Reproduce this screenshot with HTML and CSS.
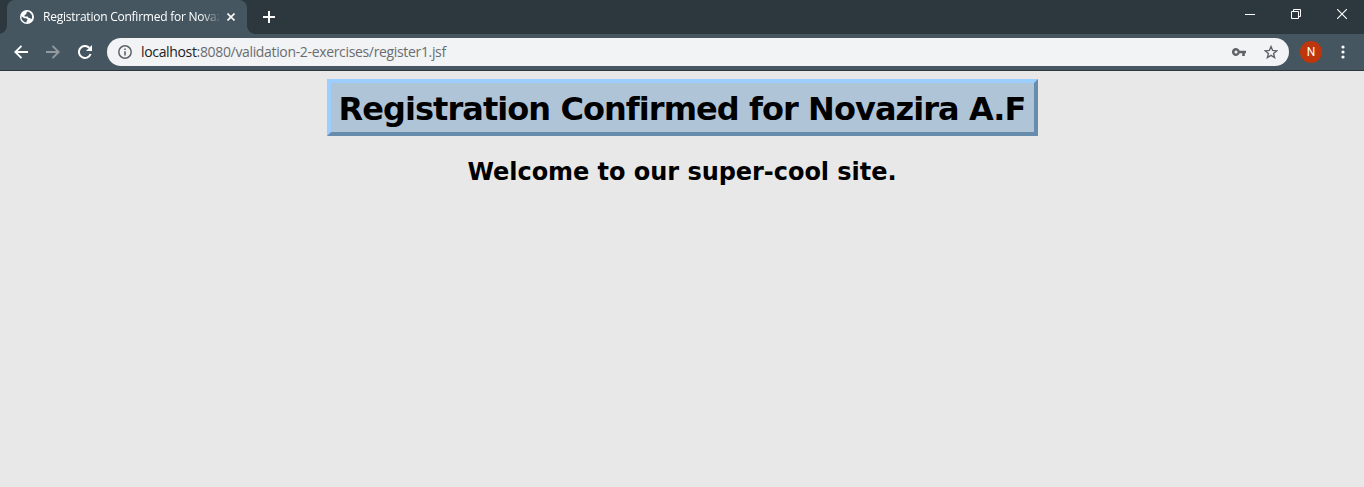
FILE: index.html
```html
<!DOCTYPE html>
<html lang="en">
<head>
<meta charset="utf-8">
<title>Registration Confirmed for Novazira A.F</title>
<link rel="stylesheet" href="styles.css">
</head>
<body>
<header class="tabstrip">
  <div class="tab">
    <svg class="globe" width="14" height="14" viewBox="0 0 14 14"><circle cx="7" cy="7" r="7" fill="#fff"/><path d="M7.8 1.6 6.4 2.6v1.3L4.6 5v1.4h3.1l1 1.5h1.6l.5 1.3 1.2-.6A5.6 5.6 0 0 0 7.8 1.6zM1.5 6.2A5.6 5.6 0 0 0 6.6 12.6v-1.7l1.1-1.5-1.6-1.2H4.2z" fill="#455660"/></svg>
    <span class="tab-title">Registration Confirmed for Novazira A.F</span>
    <svg class="tab-close" width="8" height="8" viewBox="0 0 8 8"><path d="M.5.5l7 7M7.5.5l-7 7" stroke="#fff" stroke-width="1.6"/></svg>
  </div>
  <svg class="newtab" width="12" height="12" viewBox="0 0 12 12"><path d="M6 0v12M0 6h12" stroke="#fff" stroke-width="2"/></svg>
  <div class="window-controls">
    <svg width="10" height="10" viewBox="0 0 10 10"><path d="M0 5.5h10" stroke="#fff"/></svg>
    <svg width="10" height="10" viewBox="0 0 10 10" fill="none" stroke="#fff"><path d="M.5 2.5h7v7h-7zM2.5 2.5v-2h7v7h-2"/></svg>
    <svg width="10" height="10" viewBox="0 0 10 10"><path d="M0 0l10 10M10 0L0 10" stroke="#fff" stroke-width="1.1"/></svg>
  </div>
</header>
<nav class="toolbar">
  <svg class="back" width="14" height="14" viewBox="0 0 14 14" fill="none" stroke="#fff" stroke-width="1.9"><path d="M14 7H1.5M7.5.8 1.3 7l6.2 6.2"/></svg>
  <svg class="forward" width="14" height="14" viewBox="0 0 14 14" fill="none" stroke="#919ba1" stroke-width="1.9"><path d="M0 7h12.5M6.5.8 12.7 7l-6.2 6.2"/></svg>
  <svg class="reload" width="14" height="14" viewBox="0 0 14 14"><path d="M12.6 9A6 6 0 1 1 11.3 2.8" fill="none" stroke="#fff" stroke-width="2"/><path d="M14 0v6H8z" fill="#fff"/></svg>
  <div class="omnibox">
    <svg class="info" width="14" height="14" viewBox="0 0 14 14"><circle cx="7" cy="7" r="6.2" fill="none" stroke="#5f6368" stroke-width="1.5"/><path d="M7 6.2v4.3M7 3.5v1.5" stroke="#5f6368" stroke-width="1.6"/></svg>
    <span class="url"><b>localhost</b>:8080/validation-2-exercises/register1.jsf</span>
    <svg class="key" width="14" height="8" viewBox="0 0 14 8"><path fill="#5f6368" fill-rule="evenodd" d="M7.7 2.7H14v2.6h-1.2V8h-2.6V5.3H7.7a4 4 0 1 1 0-2.6zM4 2.5a1.5 1.5 0 1 0 0 3 1.5 1.5 0 0 0 0-3z"/></svg>
    <svg class="star" width="14" height="14" viewBox="0 0 14 14"><path d="M7 1.6l1.6 3.8 4.200.4-3.200 2.700 1 4.100L7 10.400l-3.600 2.200 1-4.100-3.200-2.700 4.200-.4z" fill="none" stroke="#5f6368" stroke-width="1.4"/></svg>
  </div>
  <div class="avatar">N</div>
  <svg class="menu" width="4" height="14" viewBox="0 0 4 14" fill="#fff"><circle cx="2" cy="2" r="1.6"/><circle cx="2" cy="7" r="1.6"/><circle cx="2" cy="12" r="1.6"/></svg>
</nav>
<main class="page">
  <h1 class="title">Registration Confirmed for Novazira A.F</h1>
  <h2 class="welcome">Welcome to our super-cool site.</h2>
</main>
</body>
</html>
```
FILE: styles.css
```css
* { box-sizing: border-box; }
body {
  margin: 0;
  height: 487px;
  overflow: hidden;
  background: #e8e8e8;
  font-family: "Open Sans", "Noto Sans", sans-serif;
}
svg { display: block; flex: none; }
.tabstrip {
  display: flex;
  height: 34px;
  padding-left: 7px;
  background: #2d383e;
}
.tab {
  position: relative;
  display: flex;
  align-items: center;
  width: 240px;
  height: 34px;
  padding: 0 12px 0 13px;
  border-radius: 8px 8px 0 0;
  background: #455660;
}
.tab::before, .tab::after {
  content: "";
  position: absolute;
  bottom: 0;
  width: 8px;
  height: 8px;
}
.tab::before { left: -8px; background: radial-gradient(circle at 0 0, #2d383e 7.5px, #455660 8px); }
.tab::after { right: -8px; background: radial-gradient(circle at 100% 0, #2d383e 7.5px, #455660 8px); }
.tab-title {
  width: 176px;
  margin-left: 9px;
  overflow: hidden;
  white-space: nowrap;
  font-size: 12px;
  line-height: 18px;
  letter-spacing: -0.24px;
  color: #fff;
  -webkit-mask-image: linear-gradient(90deg, #000 158px, transparent 178px);
  mask-image: linear-gradient(90deg, #000 158px, transparent 178px);
}
.tab-close { margin-left: 8px; }
.newtab { margin: 11px 0 0 16px; }
.window-controls {
  display: flex;
  gap: 36px;
  margin: 9px 17px 0 auto;
}
.toolbar {
  display: flex;
  align-items: center;
  height: 37px;
  padding: 0 19px 1px 14px;
  border-bottom: 1px solid #2d383e;
  background: #455660;
}
.forward { margin-left: 18px; }
.reload { margin-left: 18px; }
.omnibox {
  display: flex;
  flex: 1;
  align-items: center;
  height: 28px;
  margin-left: 15px;
  padding: 0 11px;
  border-radius: 14px;
  background: #f1f3f4;
}
.url {
  margin-left: 9px;
  font-size: 14px;
  line-height: 20px;
  letter-spacing: -0.34px;
  white-space: nowrap;
  color: #6a6d70;
}
.url b { font-weight: 400; color: #202124; }
.key { margin-left: auto; }
.star { margin-left: 18px; }
.avatar {
  width: 22px;
  height: 22px;
  margin-left: 11px;
  border-radius: 50%;
  background: #bf360c;
  color: #fff;
  font: 12px/22px Roboto, sans-serif;
  text-align: center;
}
.menu { margin-left: 19px; }
.page {
  display: flex;
  flex-direction: column;
  align-items: center;
  padding-top: 8px;
  font-family: "DejaVu Sans", sans-serif;
  color: #000;
}
.title {
  width: 711px;
  height: 57px;
  margin: 0;
  border: 4px solid;
  border-color: #9cceff #688cac #688cac #9cceff;
  background: #b0c4d8;
  font-size: 32px;
  line-height: 53px;
  letter-spacing: -0.94px;
  text-align: center;
  white-space: nowrap;
}
.welcome {
  margin: 21px 0 0;
  font-size: 24px;
  line-height: 31px;
  letter-spacing: -0.04px;
  white-space: nowrap;
}
```
